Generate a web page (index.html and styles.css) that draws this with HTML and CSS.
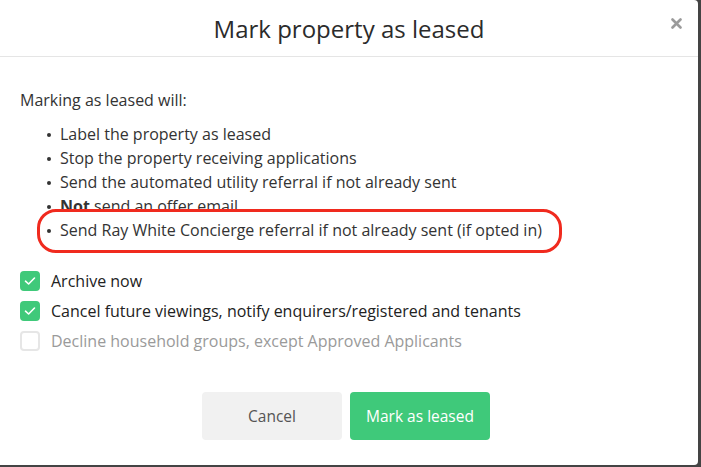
FILE: index.html
```html
<!DOCTYPE html>
<html lang="en">
<head>
    <meta charset="UTF-8">
    <meta name="viewport" content="width=device-width, initial-scale=1.0">
    <title>Mark property as leased</title>
    <link rel="stylesheet" href="styles.css">
</head>
<body>
    <div class="modal">
        <div class="modal-header">
            <h4 class="modal-title">Mark property as leased</h4>
            <span class="close">
                <svg width="11" height="11" viewBox="0 0 11 11"><path d="M1.5 1.5 L9.5 9.5 M9.5 1.5 L1.5 9.5" stroke="#9b9b9b" stroke-width="2.6" stroke-linecap="round"/></svg>
            </span>
        </div>

        <div class="modal-body">
            <p class="intro">Marking as leased will:</p>
            <ul class="effects">
                <li>Label the property as leased</li>
                <li>Stop the property receiving applications</li>
                <li>Send the automated utility referral if not already sent</li>
                <li><b>Not</b> send an offer email</li>
                <li class="highlight">Send Ray White Concierge referral if not already sent (if opted in)</li>
            </ul>

            <div class="options">
                <label class="option">
                    <span class="box checked">
                        <svg width="12" height="10" viewBox="0 0 12 10"><path d="M1.5 5.2 L4.6 8 L10.5 2" fill="none" stroke="#fff" stroke-width="1.6" stroke-linecap="round" stroke-linejoin="round"/></svg>
                    </span>
                    Archive now
                </label>
                <label class="option">
                    <span class="box checked">
                        <svg width="12" height="10" viewBox="0 0 12 10"><path d="M1.5 5.2 L4.6 8 L10.5 2" fill="none" stroke="#fff" stroke-width="1.6" stroke-linecap="round" stroke-linejoin="round"/></svg>
                    </span>
                    Cancel future viewings, notify enquirers/registered and tenants
                </label>
                <label class="option disabled">
                    <span class="box"></span>
                    Decline household groups, except Approved Applicants
                </label>
            </div>
        </div>

        <div class="modal-footer">
            <button class="btn btn-cancel">Cancel</button>
            <button class="btn btn-leased">Mark as leased</button>
        </div>
    </div>
</body>
</html>
```

FILE: styles.css
```css
* {
    box-sizing: border-box;
    margin: 0;
    padding: 0;
}

body {
    font-family: "Open Sans", Lato, sans-serif;
    background-color: #444444;
    color: #333333;
}

.modal {
    width: 698px;
    height: 465px;
    background-color: #ffffff;
    border-radius: 0 4px 4px 0;
    display: flex;
    flex-direction: column;
}

.modal-header {
    position: relative;
    height: 57px;
    border-bottom: 1px solid #e5e5e5;
    display: flex;
    align-items: center;
    justify-content: center;
}

.modal-title {
    font-size: 24px;
    font-weight: 400;
    color: #2b2b2b;
}

.close {
    position: absolute;
    right: 16px;
    top: 18px;
    display: flex;
}

.modal-body {
    padding: 31px 20px 0 20px;
    font-size: 16px;
}

.intro {
    line-height: 24px;
    font-weight: 500;
    margin-bottom: 10px;
}

.effects {
    list-style: none;
    padding-left: 40px;
    margin-bottom: 29px;
}

.effects li {
    line-height: 24px;
    position: relative;
}

.effects li::before {
    content: "";
    position: absolute;
    left: -13px;
    top: 11px;
    width: 4px;
    height: 4px;
    border-radius: 50%;
    background-color: #333333;
}

.effects li.highlight::after {
    content: "";
    position: absolute;
    left: -23px;
    top: -9px;
    width: 519px;
    height: 38px;
    border: 3px solid #f02a1e;
    border-radius: 19px;
}

.options {
    display: flex;
    flex-direction: column;
    gap: 10px;
}

.option {
    display: flex;
    align-items: center;
    gap: 11px;
    line-height: 20px;
    font-weight: 500;
    color: #222222;
}

.option.disabled {
    color: #9a9a9a;
    font-weight: 400;
}

.box {
    width: 20px;
    height: 20px;
    border-radius: 4px;
    border: 2px solid #e6e6e6;
    display: flex;
    align-items: center;
    justify-content: center;
}

.box.checked {
    background-color: #3fc97a;
    border-color: #3fc97a;
}

.modal-footer {
    display: flex;
    justify-content: center;
    gap: 8px;
    padding-top: 41px;
    padding-right: 6px;
}

.btn {
    width: 140px;
    height: 48px;
    border: none;
    border-radius: 4px;
    font-family: "Open Sans", Lato, sans-serif;
    font-size: 15.5px;
}

.btn-cancel {
    background-color: #f1f1f1;
    color: #555555;
}

.btn-leased {
    background-color: #3fc97a;
    color: #ffffff;
}
```
